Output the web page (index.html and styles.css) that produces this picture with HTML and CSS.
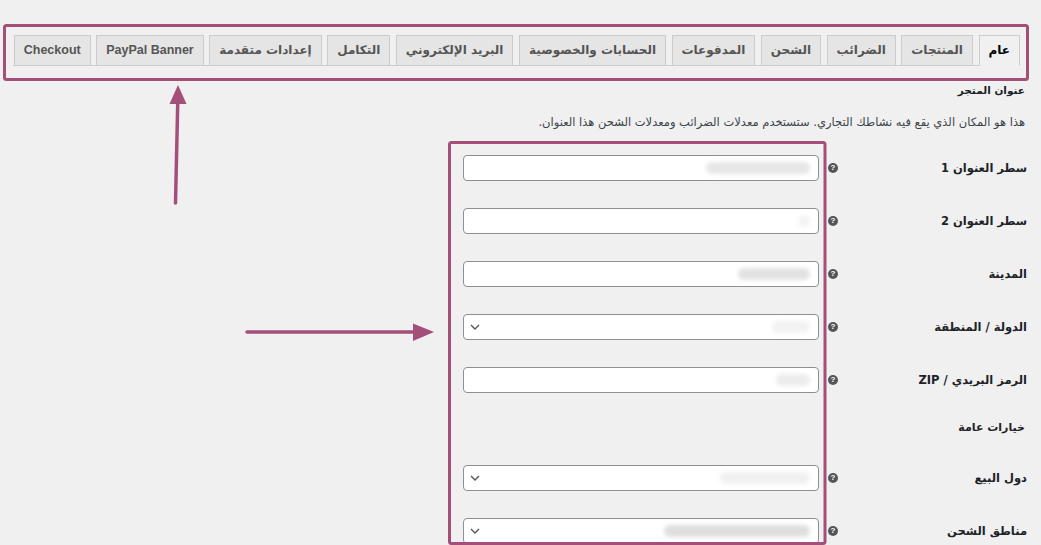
FILE: index.html
```html
<!DOCTYPE html>
<html lang="ar" dir="rtl">

<head>
  <meta charset="utf-8">
  <title>إعدادات المتجر - عام</title>
  <link rel="stylesheet" href="styles.css">
</head>

<body>

  <div class="wrap">
    <nav class="nav-tabs">
      <a class="nav-tab active" href="#">عام</a>
      <a class="nav-tab" href="#">المنتجات</a>
      <a class="nav-tab" href="#">الضرائب</a>
      <a class="nav-tab" href="#">الشحن</a>
      <a class="nav-tab" href="#">المدفوعات</a>
      <a class="nav-tab" href="#">الحسابات والخصوصية</a>
      <a class="nav-tab" href="#">البريد الإلكتروني</a>
      <a class="nav-tab" href="#">التكامل</a>
      <a class="nav-tab" href="#">إعدادات متقدمة</a>
      <a class="nav-tab" href="#" lang="en">PayPal Banner</a>
      <a class="nav-tab" href="#" lang="en">Checkout</a>
    </nav>

    <h2 class="section-title">عنوان المتجر</h2>
    <p class="section-desc">هذا هو المكان الذي يقع فيه نشاطك التجاري. ستستخدم معدلات الضرائب ومعدلات الشحن هذا العنوان.</p>

    <div class="form-rows">
      <div class="row">
        <label>سطر العنوان 1</label>
        <span class="help-tip">?</span>
        <div class="field"><span class="blur blur-a"></span></div>
      </div>
      <div class="row">
        <label>سطر العنوان 2</label>
        <span class="help-tip">?</span>
        <div class="field"><span class="blur blur-b"></span></div>
      </div>
      <div class="row">
        <label>المدينة</label>
        <span class="help-tip">?</span>
        <div class="field"><span class="blur blur-c"></span></div>
      </div>
      <div class="row">
        <label>الدولة / المنطقة</label>
        <span class="help-tip">?</span>
        <div class="field select">
          <span class="blur blur-d"></span>
          <svg class="chevron" viewBox="0 0 10 6"><path d="M1 1l4 4 4-4" /></svg>
        </div>
      </div>
      <div class="row">
        <label>الرمز البريدي / ZIP</label>
        <span class="help-tip">?</span>
        <div class="field"><span class="blur blur-e"></span></div>
      </div>
    </div>

    <h2 class="section-title general">خيارات عامة</h2>

    <div class="form-rows">
      <div class="row">
        <label>دول البيع</label>
        <span class="help-tip">?</span>
        <div class="field select">
          <span class="blur blur-f"></span>
          <svg class="chevron" viewBox="0 0 10 6"><path d="M1 1l4 4 4-4" /></svg>
        </div>
      </div>
      <div class="row">
        <label>مناطق الشحن</label>
        <span class="help-tip">?</span>
        <div class="field select">
          <span class="blur blur-g"></span>
          <svg class="chevron" viewBox="0 0 10 6"><path d="M1 1l4 4 4-4" /></svg>
        </div>
      </div>
    </div>
  </div>

  <!-- annotation layer drawn over the screenshot -->
  <svg class="annotations" width="1041" height="545" viewBox="0 0 1041 545">
    <rect x="4.5" y="25.5" width="1023" height="54" rx="2" />
    <rect x="449.5" y="142.5" width="375.5" height="401" rx="2" />
    <line x1="175.5" y1="203" x2="177.8" y2="100" />
    <polygon points="178,85 169.5,104 186.5,104" />
    <line x1="247" y1="332" x2="416" y2="332" />
    <polygon points="434,332 413,323.5 413,341" />
  </svg>

</body>

</html>
```

FILE: styles.css
```css
html {
  overflow: hidden;
}

body {
  margin: 0;
  background-color: #f0f0f1;
  color: #1d2327;
  font-family: "DejaVu Sans", "Liberation Sans", sans-serif;
  font-size: 12px;
}

.wrap {
  direction: rtl;
  padding: 35px 14px 0 0;
}

.nav-tabs {
  display: flex;
  gap: 5.5px;
  margin-inline: 7px 13px;
  border-bottom: 1px solid #ccc;

  .nav-tab {
    display: block;
    margin-bottom: -1px;
    border: 1px solid #ccc;
    padding: 5px 9px;
    background-color: #e5e5e5;
    color: #555;
    font-size: 12px;
    font-weight: 700;
    line-height: 19px;
    text-decoration: none;
    white-space: nowrap;

    &:lang(en) {
      font-family: "Liberation Sans", sans-serif;
      font-size: 12.5px;
    }

    &.active {
      background-color: #f0f0f1;
      border-bottom-color: #f0f0f1;
      color: #000;
    }
  }
}

.section-title {
  margin: 16px 2px 0 0;
  font-size: 10.5px;
  font-weight: 700;
  line-height: 16px;

  &.general {
    margin: 1px 2px 29px 0;
    font-size: 11px;
  }
}

.section-desc {
  margin: 16px 2px 25px 0;
  color: #3c434a;
  font-size: 11.5px;
  line-height: 16px;
}

.row {
  display: grid;
  grid-template-columns: 187px 14px 363px;
  align-items: center;
  margin-bottom: 27px;

  label {
    font-size: 11.5px;
    font-weight: 700;
  }
}

.help-tip {
  justify-self: center;
  display: grid;
  place-items: center;
  inline-size: 10px;
  block-size: 10px;
  border-radius: 50%;
  background-color: #555;
  color: #fff;
  font-family: "Liberation Sans", sans-serif;
  font-size: 8px;
  font-weight: 700;
  line-height: 1;
}

.field {
  display: flex;
  align-items: center;
  box-sizing: border-box;
  block-size: 26px;
  margin-right: 7px;
  border: 1px solid #8c8f94;
  border-radius: 4px;
  background-color: #fff;
  padding: 0 8px 0 6px;

  .chevron {
    margin-right: auto;
    inline-size: 10px;
    block-size: 6px;
    fill: none;
    stroke: #50575e;
    stroke-width: 1.4;
  }
}

/* blurred, redacted values */
.blur {
  block-size: 12px;
  border-radius: 6px;
  background-color: #e6e6e6;
  filter: blur(2px);

  &.blur-a { inline-size: 104px; }
  &.blur-b { inline-size: 12px; background-color: #f3f3f3; }
  &.blur-c { inline-size: 72px; background-color: #e2e2e2; }
  &.blur-d { inline-size: 38px; background-color: #f2f2f2; }
  &.blur-e { inline-size: 34px; background-color: #ececec; }
  &.blur-f { inline-size: 90px; background-color: #f0f0f0; }
  &.blur-g { inline-size: 146px; background-color: #dedede; }
}

.annotations {
  position: absolute;
  top: 0;
  left: 0;
  pointer-events: none;

  rect,
  line {
    fill: none;
    stroke: #a44e7a;
    stroke-width: 3;
  }

  line {
    stroke-width: 3.5;
    stroke-linecap: round;
  }

  polygon {
    fill: #a44e7a;
  }
}
```
